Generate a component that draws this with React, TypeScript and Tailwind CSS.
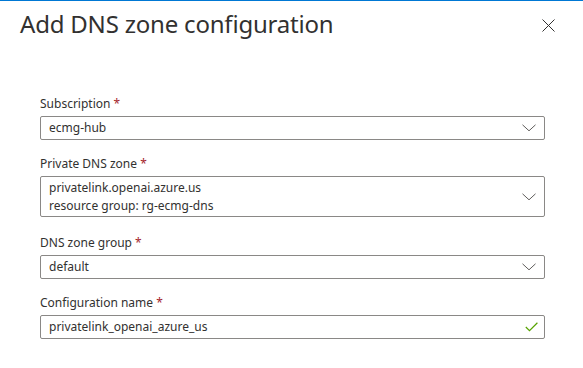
import React from "react";

const font = { fontFamily: '"Noto Sans", "Open Sans", sans-serif' };

function Label({ text }: { text: string }) {
  return (
    <div className="h-[18px] pt-[1px] text-[12px] leading-[18px] text-[#323130]">
      {text} <span className="text-[#a4262c]">*</span>
    </div>
  );
}

function Chevron() {
  return (
    <svg width="14" height="8" viewBox="0 0 14 8" className="shrink-0">
      <path d="M0.5 0.8 L7 6.8 L13.5 0.8" fill="none" stroke="#605e5c" strokeWidth="1" />
    </svg>
  );
}

function Check() {
  return (
    <svg width="13" height="10" viewBox="0 0 13 10" className="shrink-0">
      <path d="M0.8 5 L4.5 8.6 L12.4 0.8" fill="none" stroke="#57a300" strokeWidth="1.2" />
    </svg>
  );
}

export default function App() {
  return (
    <div className="w-[583px] h-[368px] bg-white border-t border-[#0078d4] overflow-hidden" style={font}>
      <div className="flex items-start justify-between pl-[20px] pr-[28px] pt-[7px]">
        <div className="text-[24px] leading-[32px] tracking-[-0.2px] text-[#323130]">Add DNS zone configuration</div>
        <svg width="13" height="13" viewBox="0 0 13 13" className="mt-[11px]">
          <path d="M0.5 0.5 L12.5 12.5 M12.5 0.5 L0.5 12.5" stroke="#323130" strokeWidth="1" />
        </svg>
      </div>
      <div className="flex flex-col gap-[14px] pl-[40px] pr-[38px] pt-[54px] text-[12px] text-[#323130]">
        <div className="flex flex-col gap-[4px]">
          <Label text="Subscription" />
          <div className="h-[24px] border border-[#8a8886] rounded-[2px] flex items-center justify-between pl-[8px] pr-[8px] leading-[18px]">
            <span>ecmg-hub</span>
            <Chevron />
          </div>
        </div>
        <div className="flex flex-col gap-[4px]">
          <Label text="Private DNS zone" />
          <div className="h-[41px] border border-[#8a8886] rounded-[2px] flex items-center justify-between pl-[8px] pr-[8px] leading-[18px]">
            <div className="flex flex-col">
              <span>privatelink.openai.azure.us</span>
              <span>resource group: rg-ecmg-dns</span>
            </div>
            <Chevron />
          </div>
        </div>
        <div className="flex flex-col gap-[4px] mt-[2px]">
          <Label text="DNS zone group" />
          <div className="h-[24px] border border-[#8a8886] rounded-[2px] flex items-center justify-between pl-[8px] pr-[8px] leading-[18px]">
            <span>default</span>
            <Chevron />
          </div>
        </div>
        <div className="flex flex-col gap-[4px]">
          <Label text="Configuration name" />
          <div className="h-[24px] border border-[#8a8886] rounded-[2px] flex items-center justify-between pl-[8px] pr-[6px] leading-[18px]">
            <span>privatelink_openai_azure_us</span>
            <Check />
          </div>
        </div>
      </div>
    </div>
  );
}
